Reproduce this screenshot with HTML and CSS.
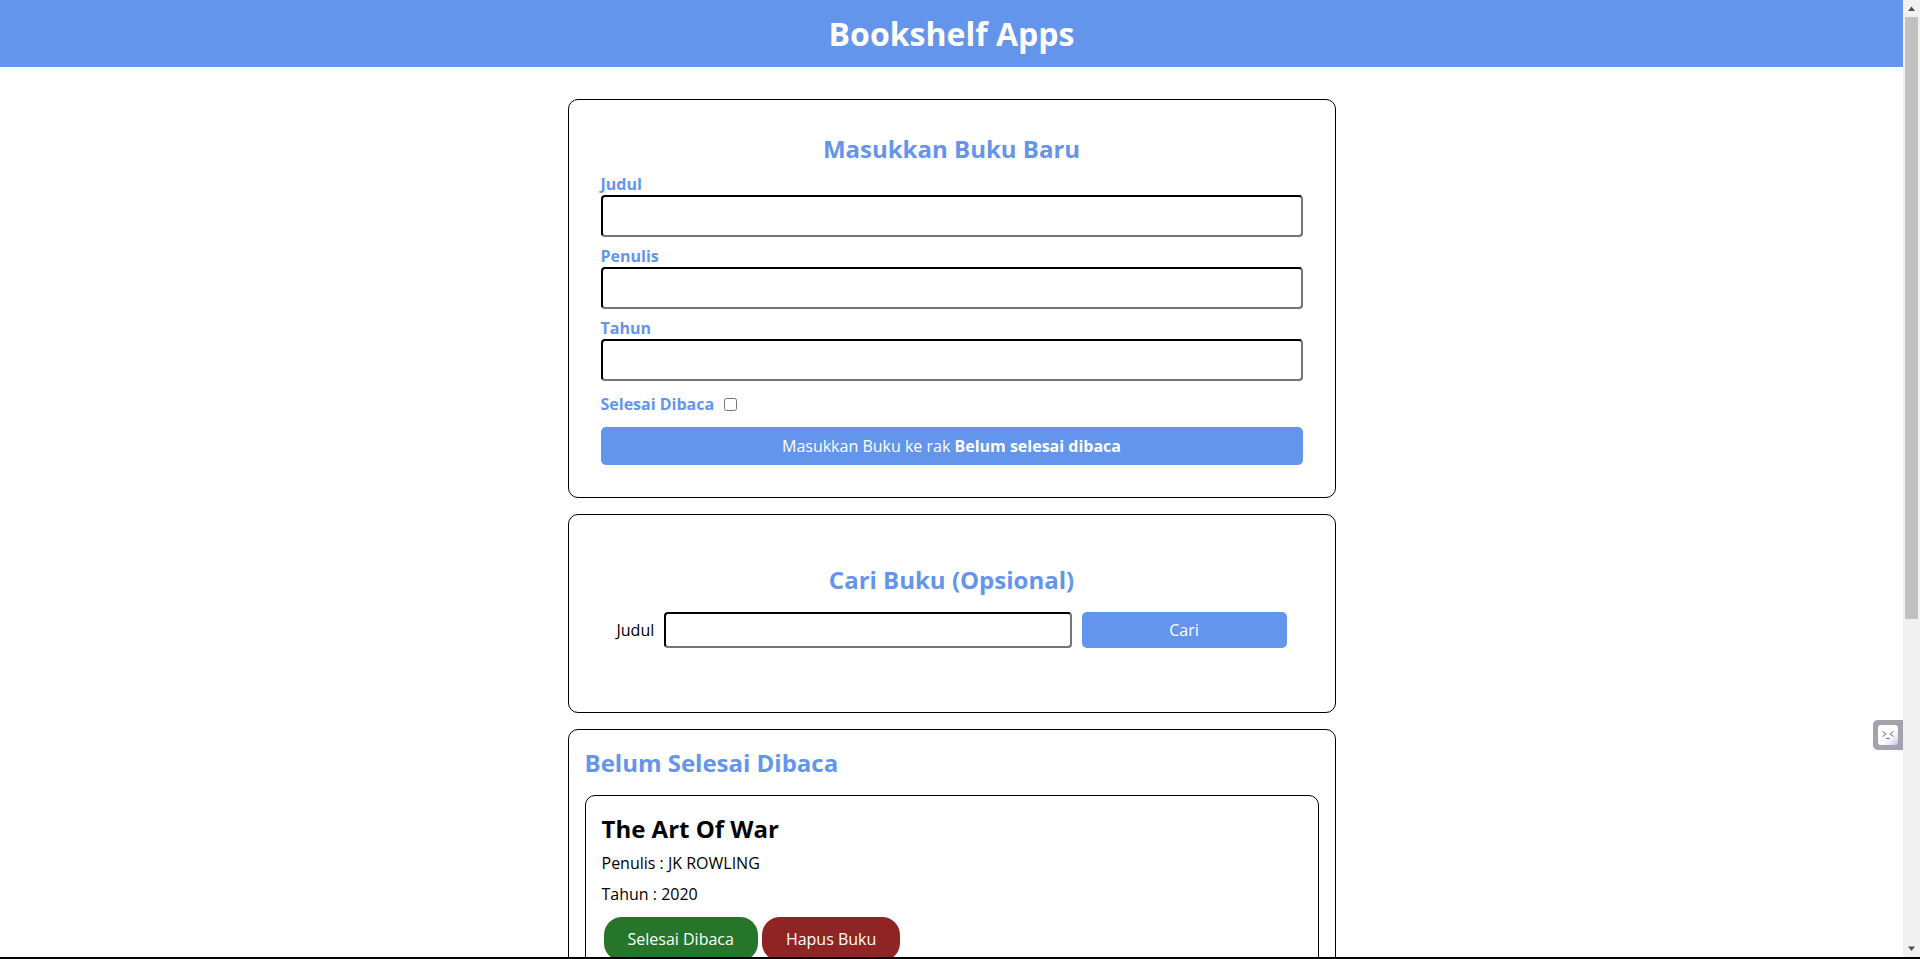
FILE: index.html
```html
<!DOCTYPE html>
<html lang="id">
<head>
<meta charset="utf-8">
<title>Bookshelf Apps</title>
<link rel="stylesheet" href="styles.css">
</head>
<body>
<div class="window">
  <div class="page">
    <header class="head"><h1>Bookshelf Apps</h1></header>
    <main class="main">
      <section class="card card-input">
        <h2 class="title center">Masukkan Buku Baru</h2>
        <form class="book-form">
          <div class="field"><label class="lbl">Judul</label><input class="box" type="text"></div>
          <div class="field"><label class="lbl">Penulis</label><input class="box" type="text"></div>
          <div class="field"><label class="lbl">Tahun</label><input class="box" type="text"></div>
          <div class="check"><label class="lbl">Selesai Dibaca</label><input class="tick" type="checkbox"></div>
          <button class="submit" type="button">Masukkan Buku ke rak <b>Belum selesai dibaca</b></button>
        </form>
      </section>
      <section class="card card-search">
        <h2 class="title center">Cari Buku (Opsional)</h2>
        <form class="search">
          <label class="search-lbl">Judul</label>
          <input class="box search-box" type="text">
          <button class="submit search-btn" type="button">Cari</button>
        </form>
      </section>
      <section class="card card-list">
        <h2 class="title">Belum Selesai Dibaca</h2>
        <article class="book">
          <h3 class="book-title">The Art Of War</h3>
          <p class="meta">Penulis : JK ROWLING</p>
          <p class="meta">Tahun : 2020</p>
          <div class="actions">
            <button class="pill green" type="button">Selesai Dibaca</button>
            <button class="pill red" type="button">Hapus Buku</button>
          </div>
        </article>
      </section>
    </main>
  </div>
  <div class="scrollbar">
    <svg class="arrow" width="17" height="17" viewBox="0 0 17 17"><path d="M8.5 6.5 L12 11 H5 Z" fill="#505050"/></svg>
    <div class="track"><div class="thumb"></div></div>
    <svg class="arrow" width="17" height="17" viewBox="0 0 17 17"><path d="M8.5 11 L12 6.5 H5 Z" fill="#505050"/></svg>
  </div>
  <div class="widget">
    <div class="widget-face">
      <svg width="20" height="20" viewBox="0 0 20 20"><path d="M4.5 6.5 L8 9 L4.5 11.5 M15.5 6.5 L12 9 L15.5 11.5 M8 13 L10 13.8 L12 13" fill="none" stroke="#6b6b78" stroke-width="1"/></svg>
    </div>
  </div>
</div>
<div class="edge"></div>
</body>
</html>
```
FILE: styles.css
```css
* { box-sizing: border-box; }
html, body { margin: 0; height: 959px; overflow: hidden; background: #fff; }
body { font-family: "Open Sans", "Noto Sans", sans-serif; font-size: 16px; color: #000; }
.window { position: relative; display: flex; height: 957px; overflow: hidden; }
.page { flex: 1; min-width: 0; }
.edge { height: 2px; background: #000; }
.head { height: 67px; background: #6495ed; display: flex; align-items: center; justify-content: center; }
.head h1 { margin: 0; color: #fff; font-size: 32px; font-weight: 700; line-height: 44px; }
.main { width: 768px; margin: 32px auto 0; display: flex; flex-direction: column; gap: 16px; }
.card { border: 1px solid #000; border-radius: 10px; background: #fff; }
.card-input { padding: 32px; height: 399px; }
.card-search { padding: 48px 32px 0; height: 199px; }
.card-list { padding: 16px; }
.title { margin: 0; font-size: 24px; font-weight: 700; line-height: 33px; color: #6495ed; }
.center { text-align: center; }
.book-form { margin-top: 8px; }
.field { margin-bottom: 8px; }
.lbl { display: block; font-size: 16px; font-weight: 700; line-height: 22px; color: #6495ed; }
.box { display: block; width: 100%; height: 42px; padding: 0 8px; border: 2px inset #767676; border-top-color: #1a1a1a; border-left-color: #1a1a1a; border-radius: 4px; background: #fff; font-family: inherit; font-size: 16px; }
.check { display: flex; align-items: center; height: 22px; margin-top: 12px; }
.tick { width: 13px; height: 13px; margin: 0 0 0 10px; accent-color: #6495ed; }
.submit { display: block; width: 100%; height: 38px; margin-top: 12px; border: 0; border-radius: 5px; background: #6495ed; color: #fff; font-family: inherit; font-size: 16px; padding: 0; }
.search { display: flex; align-items: center; margin-top: 16px; padding-left: 16px; }
.search-lbl { width: 47px; flex: none; line-height: 22px; }
.search-box { width: 408px; flex: none; height: 36px; }
.search-btn { width: 205px; flex: none; height: 36px; margin: 0 0 0 10px; }
.book { margin-top: 16px; border: 1px solid #000; border-radius: 10px; padding: 16px 16px; }
.book-title { margin: 0; font-size: 24px; font-weight: 700; line-height: 33px; }
.meta { margin: 7px 0 0; font-size: 16px; line-height: 22px; }
.meta + .meta { margin-top: 9px; }
.actions { display: flex; gap: 4px; margin: 12px 0 0 2px; }
.pill { height: 44px; padding: 0 24px; border: 0; border-radius: 18px; color: #fff; font-family: inherit; font-size: 16px; }
.green { background: #27752a; }
.red { background: #8f2424; }
.scrollbar { width: 17px; flex: none; background: #f1f1f1; display: flex; flex-direction: column; }
.arrow { display: block; flex: none; }
.track { flex: 1; padding: 0 2px; }
.thumb { height: 602px; background: #c1c1c1; }
.widget { position: absolute; top: 720px; right: 17px; width: 30px; height: 30px; padding: 5px 0 5px 5px; background: #a3a4ab; border-radius: 5px 0 0 5px; }
.widget-face { width: 20px; height: 20px; border-radius: 3px; background: linear-gradient(135deg, #fff 55%, #f0e8fa 75%, #cdb4ee 100%); }
.widget-face svg { display: block; }
```
